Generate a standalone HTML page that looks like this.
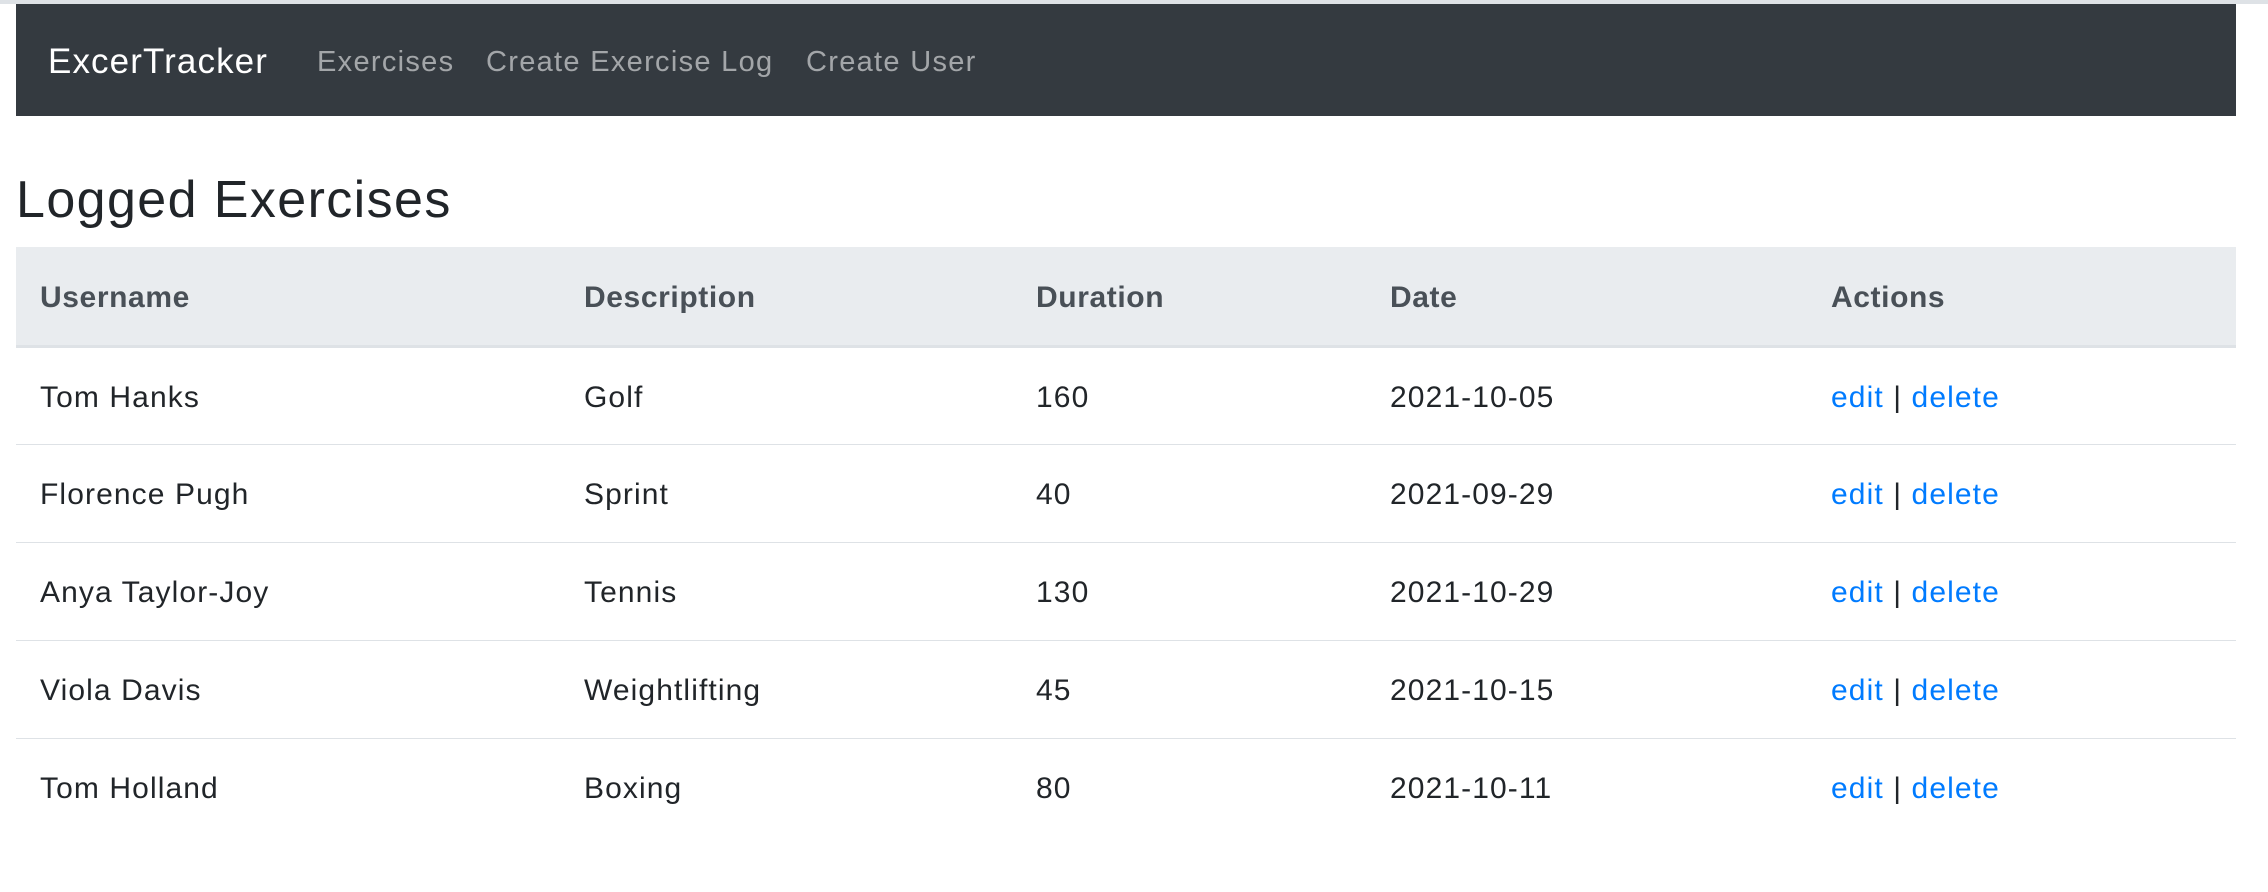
<!DOCTYPE html>
<html><head><meta charset="utf-8"><style>
*{margin:0;padding:0;box-sizing:border-box}
html,body{width:2268px;height:892px;background:#fff;overflow:hidden;font-family:"Liberation Sans",sans-serif;color:#212529}
.top{height:4px;background:#dee2e6}
nav{position:absolute;left:16px;top:4px;width:2220px;height:112px;background:#343a40}
nav span{position:absolute;top:2px;line-height:112px;white-space:nowrap}
.brand{left:32px;color:#fff;font-size:35px;letter-spacing:1.1px}
.l{color:rgba(255,255,255,.55);font-size:29px;letter-spacing:1.3px}
h1{position:absolute;left:16px;top:168px;font-size:52px;font-weight:400;line-height:64px;color:#212529;letter-spacing:1.4px}
table{position:absolute;left:16px;top:247px;width:2220px;border-collapse:collapse;table-layout:fixed;font-size:30px;letter-spacing:1.1px}
th{background:#e9ecef;color:#495057;font-weight:700;text-align:left;height:99px;padding:4px 0 0 24px;border-bottom:3px solid #dee2e6;letter-spacing:0.6px}
td{height:98px;padding:4px 0 0 24px;border-bottom:1.5px solid #dee2e6}
tr:last-child td{border-bottom:none}
a{color:#007bff;text-decoration:none}
</style></head><body>
<div class="top"></div>
<nav>
<span class="brand">ExcerTracker</span>
<span class="l" style="left:301px">Exercises</span>
<span class="l" style="left:470px">Create Exercise Log</span>
<span class="l" style="left:790px">Create User</span>
</nav>
<h1>Logged Exercises</h1>
<table>
<colgroup><col style="width:544px"><col style="width:452px"><col style="width:354px"><col style="width:441px"><col></colgroup>
<tr><th>Username</th><th>Description</th><th>Duration</th><th>Date</th><th>Actions</th></tr>
<tr><td>Tom Hanks</td><td>Golf</td><td>160</td><td>2021-10-05</td><td><a>edit</a> | <a>delete</a></td></tr>
<tr><td>Florence Pugh</td><td>Sprint</td><td>40</td><td>2021-09-29</td><td><a>edit</a> | <a>delete</a></td></tr>
<tr><td>Anya Taylor-Joy</td><td>Tennis</td><td>130</td><td>2021-10-29</td><td><a>edit</a> | <a>delete</a></td></tr>
<tr><td>Viola Davis</td><td>Weightlifting</td><td>45</td><td>2021-10-15</td><td><a>edit</a> | <a>delete</a></td></tr>
<tr><td>Tom Holland</td><td>Boxing</td><td>80</td><td>2021-10-11</td><td><a>edit</a> | <a>delete</a></td></tr>
</table>
</body></html>
